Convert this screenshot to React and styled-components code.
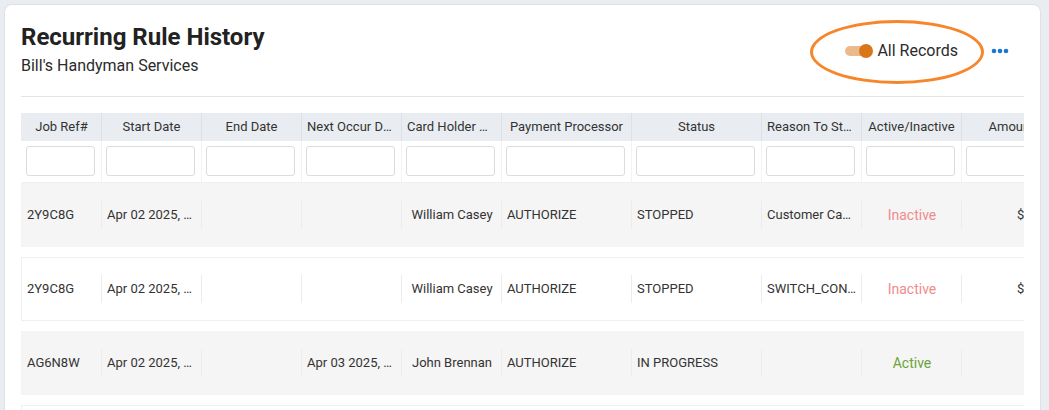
import React from 'react';
import styled, { createGlobalStyle } from 'styled-components';

const GlobalStyle = createGlobalStyle`
  body {
    margin: 0;
    background: #e9ecf1;
    font-family: Roboto, "Liberation Sans", sans-serif;
    color: #333;
  }
`;

const columns = [
  { key: 'ref', label: 'Job Ref#', width: 80 },
  { key: 'start', label: 'Start Date', width: 100 },
  { key: 'end', label: 'End Date', width: 100 },
  { key: 'next', label: 'Next Occur Date', width: 100 },
  { key: 'holder', label: 'Card Holder Name', width: 100, align: 'center' },
  { key: 'processor', label: 'Payment Processor', width: 130 },
  { key: 'status', label: 'Status', width: 130 },
  { key: 'reason', label: 'Reason To Stop', width: 100 },
  { key: 'active', label: 'Active/Inactive', width: 100, align: 'center' },
  { key: 'amount', label: 'Amount', width: 100, align: 'right' },
  { key: 'freq', label: 'Frequency', width: 100 },
];

const rows = [
  { ref: '2Y9C8G', start: 'Apr 02 2025, 10:14 AM', end: '', next: '', holder: 'William Casey', processor: 'AUTHORIZE', status: 'STOPPED', reason: 'Customer Cancelled', active: 'Inactive', amount: '$45.00', freq: 'Monthly' },
  { ref: '2Y9C8G', start: 'Apr 02 2025, 09:52 AM', end: '', next: '', holder: 'William Casey', processor: 'AUTHORIZE', status: 'STOPPED', reason: 'SWITCH_CONTRACT', active: 'Inactive', amount: '$85.00', freq: 'Monthly' },
  { ref: 'AG6N8W', start: 'Apr 02 2025, 08:30 AM', end: '', next: 'Apr 03 2025, 08:30 AM', holder: 'John Brennan', processor: 'AUTHORIZE', status: 'IN PROGRESS', reason: '', active: 'Active', amount: '$9.00', freq: 'Daily' },
  { ref: 'K7P2QX', start: 'Apr 01 2025, 04:12 PM', end: '', next: '', holder: 'Mary Collins', processor: 'AUTHORIZE', status: 'STOPPED', reason: 'Customer Cancelled', active: 'Inactive', amount: '$60.00', freq: 'Weekly' },
];

const gridTemplate = columns.map(c => `${c.width}px`).join(' ');

const App = () => {
  return (
    <>
      <GlobalStyle />
      <Page>
        <Card>
          <Header>
            <div>
              <Title>Recurring Rule History</Title>
              <Subtitle>Bill's Handyman Services</Subtitle>
            </div>
            <Controls>
              <ToggleWrap>
                <Track><Knob /></Track>
                <ToggleLabel>All Records</ToggleLabel>
                <Highlight />
              </ToggleWrap>
              <MoreButton aria-label="More">
                <svg width="18" height="6" viewBox="0 0 18 6">
                  <circle cx="3" cy="3" r="2.3" fill="#1976d2" />
                  <circle cx="9" cy="3" r="2.3" fill="#1976d2" />
                  <circle cx="15" cy="3" r="2.3" fill="#1976d2" />
                </svg>
              </MoreButton>
            </Controls>
          </Header>
          <Divider />

          <TableScroll>
            <Table>
              <HeadRow>
                {columns.map(c => (
                  <HeadCell key={c.key}>{c.label}</HeadCell>
                ))}
              </HeadRow>
              <FilterRow>
                {columns.map(c => (
                  <FilterCell key={c.key}><FilterInput /></FilterCell>
                ))}
              </FilterRow>
              {rows.map((r, i) => (
                <DataRow key={i} $striped={i % 2 === 0}>
                  {columns.map(c => (
                    <Cell key={c.key} $align={c.align}>
                      {c.key === 'active'
                        ? <StateText $active={r.active === 'Active'}>{r.active}</StateText>
                        : r[c.key]}
                    </Cell>
                  ))}
                </DataRow>
              ))}
            </Table>
          </TableScroll>
        </Card>
      </Page>
    </>
  );
};

const Page = styled.div`
  padding: 4px 8px 0 4px;
  height: 410px;
  box-sizing: border-box;
  overflow: hidden;
`;

const Card = styled.div`
  background: #fff;
  border: 1px solid #dde1e6;
  border-radius: 8px;
  padding: 18px 16px 0 16px;
  min-height: 480px;
  box-sizing: border-box;
`;

const Header = styled.div`
  display: flex;
  justify-content: space-between;
  align-items: center;
`;

const Title = styled.h1`
  margin: 0 0 5px;
  font-size: 24px;
  line-height: 28px;
  font-weight: 700;
  color: #222;
`;

const Subtitle = styled.div`
  font-size: 16px;
  line-height: 20px;
  color: #2b2b2b;
`;

const Controls = styled.div`
  display: flex;
  align-items: center;
  padding-right: 15px;
  margin-top: 2px;
`;

const ToggleWrap = styled.div`
  position: relative;
  display: flex;
  align-items: center;
  gap: 8px;
`;

const Track = styled.div`
  position: relative;
  width: 24px;
  height: 10px;
  border-radius: 5px;
  background: #ebba8c;
`;

const Knob = styled.div`
  position: absolute;
  right: -4px;
  top: -2px;
  width: 14px;
  height: 14px;
  border-radius: 50%;
  background: #d9761a;
`;

const ToggleLabel = styled.span`
  font-size: 16px;
  color: #2b2b2b;
`;

const Highlight = styled.div`
  position: absolute;
  left: -35px;
  top: -21px;
  width: 168px;
  height: 58px;
  border: 3px solid #f7862a;
  border-radius: 50%;
  pointer-events: none;
`;

const MoreButton = styled.button`
  margin-left: 33px;
  padding: 0;
  border: 0;
  background: none;
  display: flex;
  align-items: center;
  cursor: pointer;
`;

const Divider = styled.hr`
  margin: 20px 0 16px;
  border: 0;
  border-top: 1px solid #e3e3e3;
`;

const TableScroll = styled.div`
  overflow: hidden;
`;

const Table = styled.div`
  width: max-content;
  font-size: 13px;
  color: #333;
`;

const HeadRow = styled.div`
  display: grid;
  grid-template-columns: ${gridTemplate};
  height: 28px;
  padding-left: 1px;
  background: #e9edf2;
`;

const HeadCell = styled.div`
  padding: 0 5px;
  border-right: 1px solid #dde1e6;
  min-width: 0;
  line-height: 28px;
  text-align: center;
  white-space: nowrap;
  overflow: hidden;
  text-overflow: ellipsis;
`;

const FilterRow = styled.div`
  display: grid;
  grid-template-columns: ${gridTemplate};
  height: 41px;
  padding-left: 1px;
  border-bottom: 1px solid #f0f0f0;
`;

const FilterCell = styled.div`
  padding: 5px 6px 6px 4px;
  border-right: 1px solid #f3f3f3;
  min-width: 0;
`;

const FilterInput = styled.input`
  display: block;
  width: 100%;
  height: 30px;
  box-sizing: border-box;
  border: 1px solid #dcdcdc;
  border-radius: 3px;
  background: #fff;
`;

const DataRow = styled.div`
  display: grid;
  grid-template-columns: ${gridTemplate};
  align-items: center;
  height: 64px;
  box-sizing: border-box;
  margin-bottom: 10px;
  border: 1px solid ${p => (p.$striped ? '#f4f4f4' : '#f0f0f0')};
  background: ${p => (p.$striped ? '#f5f5f5' : '#fff')};
`;

const Cell = styled.div`
  height: 28px;
  line-height: 28px;
  padding: 0 4px 0 5px;
  border-right: 1px solid #ececec;
  min-width: 0;
  white-space: nowrap;
  overflow: hidden;
  text-overflow: ellipsis;
  text-align: ${p => p.$align || 'left'};
`;

const StateText = styled.span`
  font-size: 14px;
  color: ${p => (p.$active ? '#6aa43a' : '#f08c8c')};
`;

export default App;
